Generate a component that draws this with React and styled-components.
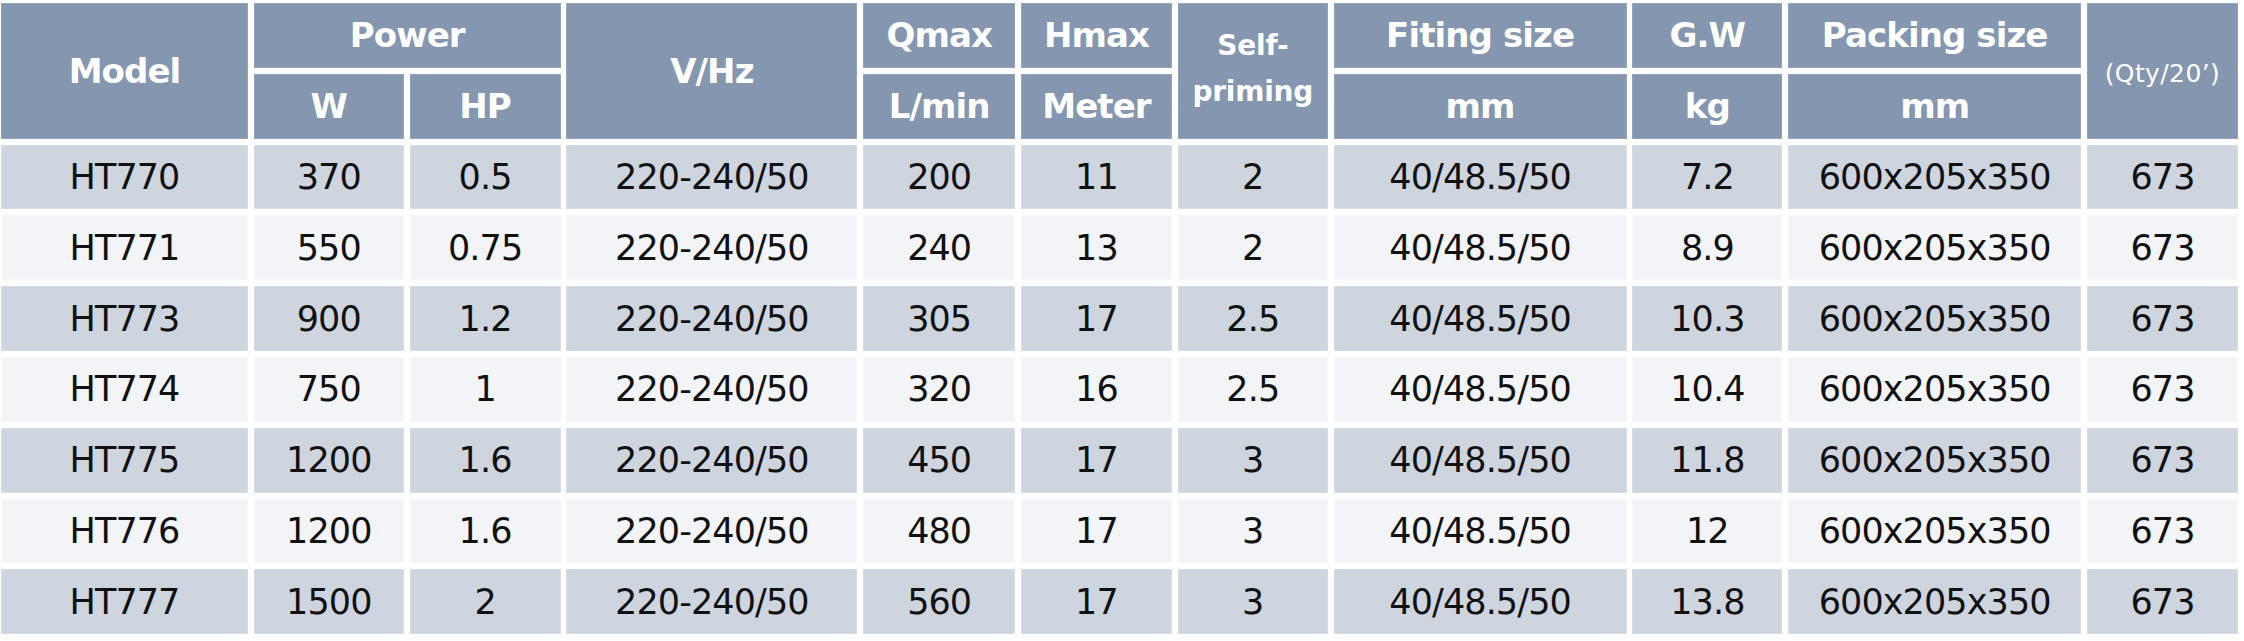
import React from 'react';
import styled, { createGlobalStyle } from 'styled-components';

const GlobalStyle = createGlobalStyle`
  html, body {
    margin: 0;
    padding: 0;
    background: #ffffff;
  }
  body {
    font-family: 'DejaVu Sans', Tahoma, Verdana, sans-serif;
  }
`;

const rows = [
  ['HT770', '370', '0.5', '220-240/50', '200', '11', '2', '40/48.5/50', '7.2', '600x205x350', '673'],
  ['HT771', '550', '0.75', '220-240/50', '240', '13', '2', '40/48.5/50', '8.9', '600x205x350', '673'],
  ['HT773', '900', '1.2', '220-240/50', '305', '17', '2.5', '40/48.5/50', '10.3', '600x205x350', '673'],
  ['HT774', '750', '1', '220-240/50', '320', '16', '2.5', '40/48.5/50', '10.4', '600x205x350', '673'],
  ['HT775', '1200', '1.6', '220-240/50', '450', '17', '3', '40/48.5/50', '11.8', '600x205x350', '673'],
  ['HT776', '1200', '1.6', '220-240/50', '480', '17', '3', '40/48.5/50', '12', '600x205x350', '673'],
  ['HT777', '1500', '2', '220-240/50', '560', '17', '3', '40/48.5/50', '13.8', '600x205x350', '673'],
];

const Page = styled.main`
  width: 2244px;
  height: 641px;
  box-sizing: border-box;
  padding: 3px 0 0 1px;
  overflow: hidden;
`;

const Sheet = styled.div`
  display: grid;
  grid-template-columns: 247px 150px 151px 291px 152px 151px 150px 293px 150px 293px 151px;
  grid-auto-rows: 64.8px;
  column-gap: 5.8px;
  row-gap: 6px;
`;

const Cell = styled.div`
  display: flex;
  align-items: center;
  justify-content: center;
  text-align: center;
  box-sizing: border-box;
  white-space: nowrap;
`;

const HeadCell = styled(Cell)`
  grid-column: span ${(p) => p.$cols || 1};
  grid-row: span ${(p) => p.$rows || 1};
  background: #8496b0;
  border: 1px solid #93a3ba;
  color: #ffffff;
  font-weight: 700;
  font-size: 34px;
  letter-spacing: -0.9px;
`;

const StackedTitle = styled.span`
  font-size: 28px;
  line-height: 46px;
  letter-spacing: -0.2px;
  white-space: normal;
  padding-bottom: 4px;
`;

const NoteTitle = styled.span`
  font-size: 25px;
  font-weight: 400;
  letter-spacing: 0.4px;
  padding-top: 6px;
`;

const DataCell = styled(Cell)`
  background: ${(p) => (p.$shade ? '#ced5df' : '#f2f4f7')};
  border: 1px solid ${(p) => (p.$shade ? '#d6dce5' : '#f6f7fa')};
  color: #111111;
  font-size: 35px;
  letter-spacing: -0.9px;
`;

export default function App() {
  return (
    <Page>
      <GlobalStyle />
      <Sheet>
        <HeadCell $rows={2}>Model</HeadCell>
        <HeadCell $cols={2}>Power</HeadCell>
        <HeadCell $rows={2}>V/Hz</HeadCell>
        <HeadCell>Qmax</HeadCell>
        <HeadCell>Hmax</HeadCell>
        <HeadCell $rows={2}>
          <StackedTitle>
            Self-
            <br />
            priming
          </StackedTitle>
        </HeadCell>
        <HeadCell>Fiting size</HeadCell>
        <HeadCell>G.W</HeadCell>
        <HeadCell>Packing size</HeadCell>
        <HeadCell $rows={2}>
          <NoteTitle>(Qty/20’)</NoteTitle>
        </HeadCell>

        <HeadCell>W</HeadCell>
        <HeadCell>HP</HeadCell>
        <HeadCell>L/min</HeadCell>
        <HeadCell>Meter</HeadCell>
        <HeadCell>mm</HeadCell>
        <HeadCell>kg</HeadCell>
        <HeadCell>mm</HeadCell>

        {rows.map((row, i) =>
          row.map((value, j) => (
            <DataCell key={`${i}-${j}`} $shade={i % 2 === 0}>
              {value}
            </DataCell>
          ))
        )}
      </Sheet>
    </Page>
  );
}
